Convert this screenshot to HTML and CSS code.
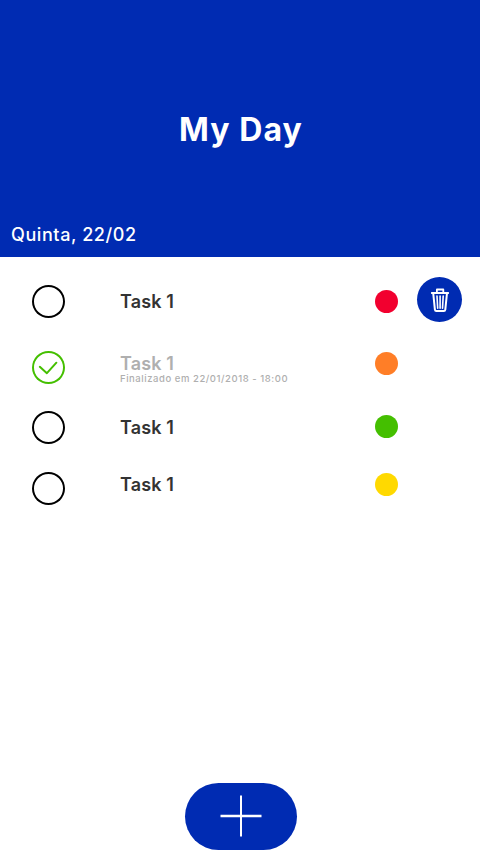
FILE: index.html
```html
<!DOCTYPE html>
<html lang="pt-BR">
<head>
<meta charset="utf-8">
<title>My Day</title>
<link rel="stylesheet" href="styles.css">
</head>
<body>
<header class="header">
  <h1 class="title">My Day</h1>
  <p class="date">Quinta, 22/02</p>
</header>
<main class="tasks">
  <article class="task">
    <span class="check"></span>
    <div class="label"><span class="name">Task 1</span></div>
    <span class="dot red"></span>
    <button class="delete" aria-label="Excluir">
      <svg width="20" height="26" viewBox="0 0 20 26" fill="none" stroke="#fff">
        <path d="M1.1 6H18.9" stroke-width="2"/>
        <path d="M6.9 5.4V2.5H13.3V5.4" stroke-width="1.8" stroke-linejoin="round"/>
        <path d="M3.3 7L4.9 22.6Q5.1 24 6.3 24H13.9Q15.1 24 15.3 22.6L16.9 7" stroke-width="2"/>
        <path d="M7 9L7.7 21.2M10.1 9V21.2M13.2 9L12.5 21.2" stroke-width="1.6" stroke-linecap="round"/>
      </svg>
    </button>
  </article>
  <article class="task done">
    <span class="check">
      <svg width="33" height="33" viewBox="0 0 33 33" fill="none" stroke="#44bf00" stroke-width="2" stroke-linecap="round" stroke-linejoin="round">
        <path d="M7.8 15.8L14.9 22.2L24.4 11.7"/>
      </svg>
    </span>
    <div class="label">
      <span class="name">Task 1</span>
      <span class="finished">Finalizado em 22/01/2018 - 18:00</span>
    </div>
    <span class="dot orange"></span>
  </article>
  <article class="task third">
    <span class="check"></span>
    <div class="label"><span class="name">Task 1</span></div>
    <span class="dot green"></span>
  </article>
  <article class="task last">
    <span class="check"></span>
    <div class="label"><span class="name">Task 1</span></div>
    <span class="dot yellow"></span>
  </article>
</main>
<footer class="footer">
  <button class="add" aria-label="Adicionar">
    <svg width="42" height="42" viewBox="0 0 42 42" fill="none" stroke="#fff" stroke-width="2" stroke-linecap="butt">
      <path d="M21 .5V41.5"/>
      <path d="M.5 21H41.5" stroke-width="2.4"/>
    </svg>
  </button>
</footer>
</body>
</html>
```
FILE: styles.css
```css
* { box-sizing: border-box; }

body {
  margin: 0;
  height: 860px;
  display: flex;
  flex-direction: column;
  background: #fff;
  color: #333;
  font-family: Inter, "Open Sans", sans-serif;
}

.header {
  height: 257px;
  padding: 109px 11px 11px;
  display: flex;
  flex-direction: column;
  justify-content: space-between;
  background: #002bb2;
  color: #fff;
}

.title {
  margin: 0;
  padding-left: 2px;
  text-align: center;
  font-size: 32px;
  line-height: 41px;
  font-weight: 700;
  letter-spacing: 1.1px;
}

.date {
  margin: 0;
  font-size: 18px;
  line-height: 22px;
  font-weight: 500;
  letter-spacing: 0.58px;
}

.tasks {
  flex: 1;
  padding-top: 20px;
}

.task {
  display: grid;
  grid-template-columns: 88px 255px 42px 45px;
  align-items: start;
  height: 62px;
  padding-left: 32px;
}

.done { height: 63px; }
.third { height: 58px; }

.check {
  width: 33px;
  height: 33px;
  margin-top: 8px;
  border-radius: 50%;
  box-shadow: inset 0 0 0 2px #000;
}

.check svg { display: block; }

.done .check {
  margin-top: 12px;
  box-shadow: inset 0 0 0 2px #44bf00;
}

.third .check { margin-top: 9px; }
.last .check { margin-top: 12px; }

.label {
  display: flex;
  flex-direction: column;
  padding-top: 14px;
}

.third .label { padding-top: 15px; }

.name {
  font-size: 18px;
  line-height: 22px;
  font-weight: 600;
  letter-spacing: 0.12px;
}

.finished {
  margin-top: -2px;
  font-size: 9.5px;
  line-height: 12px;
  font-weight: 500;
  letter-spacing: 0.55px;
}

.done .label { color: #afafaf; }

.dot {
  width: 23px;
  height: 23px;
  margin-top: 13px;
  border-radius: 50%;
}

.red { background: #f2002f; }
.orange { background: #ff7e27; }
.green { background: #44bf00; }
.yellow { background: #ffd900; }

.delete, .add {
  display: flex;
  align-items: center;
  justify-content: center;
  padding: 0;
  border: 0;
  background: #002bb2;
}

.delete {
  width: 45px;
  height: 45px;
  border-radius: 50%;
}

.footer {
  display: flex;
  justify-content: center;
  padding: 0 0 10px 2px;
}

.add {
  width: 112px;
  height: 67px;
  padding-bottom: 1px;
  border-radius: 33.5px;
}
```
